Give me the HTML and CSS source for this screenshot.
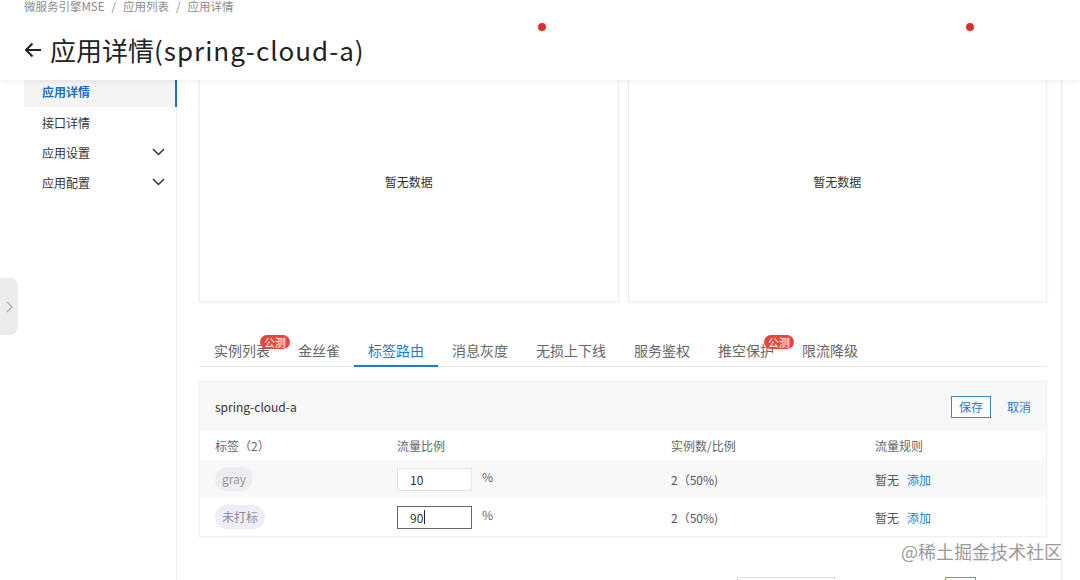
FILE: index.html
```html
<!DOCTYPE html>
<html lang="zh-CN">
<head>
  <meta charset="UTF-8">
  <title>应用详情</title>
  <link rel="stylesheet" href="styles.css">
</head>
<body>

<header class="page-header">
  <div class="breadcrumb">
    <span>微服务引擎MSE</span><span class="sep">/</span><span>应用列表</span><span class="sep">/</span><span>应用详情</span>
  </div>
  <h1 class="page-title">
    <svg class="back-icon" width="18" height="16" viewBox="0 0 18 16"><path d="M8.5 1.5 L2 8 L8.5 14.5 M2 8 H17" fill="none" stroke="#222" stroke-width="2"/></svg>
    <span>应用详情<span class="title-app">(spring-cloud-a)</span></span>
  </h1>
  <span class="dot dot-left"></span>
  <span class="dot dot-right"></span>
</header>

<div class="layout">
  <aside class="sidebar">
    <ul class="menu">
      <li class="menu-item active">应用详情</li>
      <li class="menu-item">接口详情</li>
      <li class="menu-item">应用设置
        <svg class="chevron" width="13" height="8" viewBox="0 0 13 8"><path d="M1 1 L6.5 6.5 L12 1" fill="none" stroke="#333" stroke-width="1.5"/></svg>
      </li>
      <li class="menu-item">应用配置
        <svg class="chevron" width="13" height="8" viewBox="0 0 13 8"><path d="M1 1 L6.5 6.5 L12 1" fill="none" stroke="#333" stroke-width="1.5"/></svg>
      </li>
    </ul>
  </aside>

  <main class="content">
    <div class="cards">
      <div class="card">暂无数据</div>
      <div class="card">暂无数据</div>
    </div>

    <ul class="tabs">
      <li class="tab">实例列表<span class="badge">公测</span></li>
      <li class="tab">金丝雀</li>
      <li class="tab active">标签路由</li>
      <li class="tab">消息灰度</li>
      <li class="tab">无损上下线</li>
      <li class="tab">服务鉴权</li>
      <li class="tab">推空保护<span class="badge">公测</span></li>
      <li class="tab">限流降级</li>
    </ul>

    <div class="panel">
      <div class="panel-head">
        <span>spring-cloud-a</span>
        <div class="panel-actions">
          <button class="btn-save">保存</button>
          <a class="link">取消</a>
        </div>
      </div>
      <div class="route-table">
        <div class="row row-head">
          <div>标签（2）</div>
          <div>流量比例</div>
          <div>实例数/比例</div>
          <div>流量规则</div>
        </div>
        <div class="row row-gray">
          <div><span class="tag">gray</span></div>
          <div><span class="ratio-input">10</span><span class="percent">%</span></div>
          <div>2（50%)</div>
          <div>暂无<a class="link add-link">添加</a></div>
        </div>
        <div class="row">
          <div><span class="tag tag-untagged">未打标</span></div>
          <div><span class="ratio-input focused">90<span class="caret"></span></span><span class="percent">%</span></div>
          <div>2（50%)</div>
          <div>暂无<a class="link add-link">添加</a></div>
        </div>
      </div>
    </div>

    <div class="pager">
      <span class="pager-box"></span>
      <span class="pager-page"></span>
    </div>
  </main>
</div>

<div class="side-toggle">
  <svg width="7" height="12" viewBox="0 0 7 12"><path d="M1 1 L6 6 L1 11" fill="none" stroke="#aaa" stroke-width="1.3"/></svg>
</div>

<div class="watermark">@稀土掘金技术社区</div>

</body>
</html>
```

FILE: styles.css
```css
html, body {
  margin: 0;
  padding: 0;
  height: 580px;
  overflow: hidden;
  background-color: #fff;
  color: #333;
  font-family: "Noto Sans CJK SC", "Noto Sans", sans-serif;
  font-size: 12px;
}

ul {
  list-style: none;
  margin: 0;
  padding: 0;
}

/* header */
.page-header {
  position: relative;
  z-index: 2;
  height: 80px;
  background-color: #fff;
  box-shadow: 0 2px 4px rgba(0, 0, 0, 0.06);
}

.breadcrumb {
  padding-left: 24px;
  font-size: 11.5px;
  line-height: 12px;
  color: #8c8c8c;
}

.breadcrumb .sep {
  margin: 0 7px;
}

.page-title {
  display: flex;
  align-items: center;
  margin: 19px 0 0;
  padding-left: 24px;
  font-size: 26px;
  font-weight: normal;
  line-height: 38px;
  color: #222;
}

.title-app {
  letter-spacing: 1px;
}

.back-icon {
  margin-right: 8px;
}

.dot {
  position: absolute;
  top: 23px;
  width: 8px;
  height: 8px;
  border-radius: 50%;
  background-color: #d9302c;
}

.dot-left {
  left: 538px;
}

.dot-right {
  left: 966px;
}

/* layout */
.layout {
  display: flex;
  margin-top: -20px;
}

.sidebar {
  width: 176px;
  min-height: 540px;
  border-right: 1px solid #ececec;
}

.menu {
  padding: 16px 0 0 24px;
}

.menu-item {
  display: flex;
  align-items: center;
  justify-content: space-between;
  height: 30px;
  padding: 0 11px 0 18px;
  font-size: 12px;
}

.menu-item.active {
  height: 31px;
  background-color: #f4f4f4;
  color: #1f6fc5;
  font-weight: bold;
  border-right: 2px solid #1f6fc5;
  margin-right: -1px;
}

.content {
  width: 885px;
  padding: 0 14px 0 22px;
  box-sizing: border-box;
  border-right: 1px solid #ececec;
}

/* charts */
.cards {
  display: grid;
  grid-template-columns: 1fr 1fr;
  gap: 9px;
}

.card {
  display: flex;
  align-items: center;
  justify-content: center;
  height: 242px;
  box-sizing: border-box;
  border: 1px solid #eeeeee;
  box-shadow: 0 1px 3px rgba(0, 0, 0, 0.05);
  color: #333;
}

/* tabs */
.tabs {
  display: flex;
  margin-top: 33px;
  padding-left: 1px;
  border-bottom: 1px solid #e8e8e8;
}

.tab {
  position: relative;
  height: 31px;
  line-height: 31px;
  padding: 0 14px;
  font-size: 14px;
  color: #666;
  white-space: nowrap;
}

.tab.active {
  color: #1f7ad2;
}

.tab.active::after {
  content: "";
  position: absolute;
  left: 0;
  right: 0;
  bottom: -1px;
  height: 2px;
  background-color: #1f7ad2;
}

.badge {
  position: absolute;
  left: 60px;
  top: 0;
  height: 14px;
  padding: 0 4px;
  border-radius: 7px;
  background-color: #e5483b;
  color: #fff;
  font-size: 11px;
  line-height: 14px;
  white-space: nowrap;
}

/* route panel */
.panel {
  margin-top: 14px;
  border: 1px solid #f0f0f0;
  box-shadow: 0 1px 2px rgba(0, 0, 0, 0.03);
}

.panel-head {
  display: flex;
  align-items: center;
  justify-content: space-between;
  height: 49px;
  padding: 0 15px;
  background-color: #f7f7f7;
}

.panel-actions {
  display: flex;
  align-items: center;
  gap: 16px;
}

.btn-save {
  width: 40px;
  height: 22px;
  padding: 0;
  border: 1px solid #3a86c8;
  background-color: #fff;
  color: #1f7ad2;
  font-family: inherit;
  font-size: 12px;
}

.link {
  color: #1f7ad2;
  cursor: pointer;
}

.row {
  display: grid;
  grid-template-columns: 182px 274px 204px 1fr;
  align-items: center;
  height: 38px;
  padding-left: 15px;
  color: #555;
}

.row-head {
  height: 29px;
  color: #666;
}

.row-gray {
  background-color: #f8f8f8;
}

.tag {
  display: inline-block;
  height: 24px;
  line-height: 24px;
  padding: 0 7px;
  border-radius: 12px;
  background-color: #ededf1;
  color: #999;
}

.tag-untagged {
  background-color: #efedf7;
  color: #8a8a99;
}

.ratio-input {
  display: inline-flex;
  align-items: center;
  width: 75px;
  height: 23px;
  box-sizing: border-box;
  padding-left: 12px;
  border: 1px solid #e3e3e3;
  background-color: #fff;
  color: #333;
  vertical-align: middle;
}

.ratio-input.focused {
  border-color: #666;
}

.caret {
  display: inline-block;
  width: 1px;
  height: 14px;
  margin-left: 1px;
  background-color: #222;
}

.percent {
  margin-left: 10px;
  color: #666;
}

.add-link {
  margin-left: 8px;
}

.pager {
  display: flex;
  margin-top: 40px;
  padding-left: 538px;
}

.pager-box {
  width: 96px;
  height: 24px;
  border: 1px solid #ddd;
}

.pager-page {
  width: 29px;
  height: 24px;
  margin-left: 110px;
  border: 1px solid #5b9ad6;
}

/* overlays */
.side-toggle {
  position: absolute;
  left: 0;
  top: 278px;
  display: flex;
  align-items: center;
  justify-content: center;
  width: 18px;
  height: 57px;
  background-color: #ececec;
  clip-path: polygon(0 0, 14px 0, 18px 6px, 18px 51px, 14px 57px, 0 57px);
}

.watermark {
  position: absolute;
  right: 18px;
  top: 540px;
  font-size: 18px;
  line-height: 22px;
  color: #9a9a9a;
}
```
